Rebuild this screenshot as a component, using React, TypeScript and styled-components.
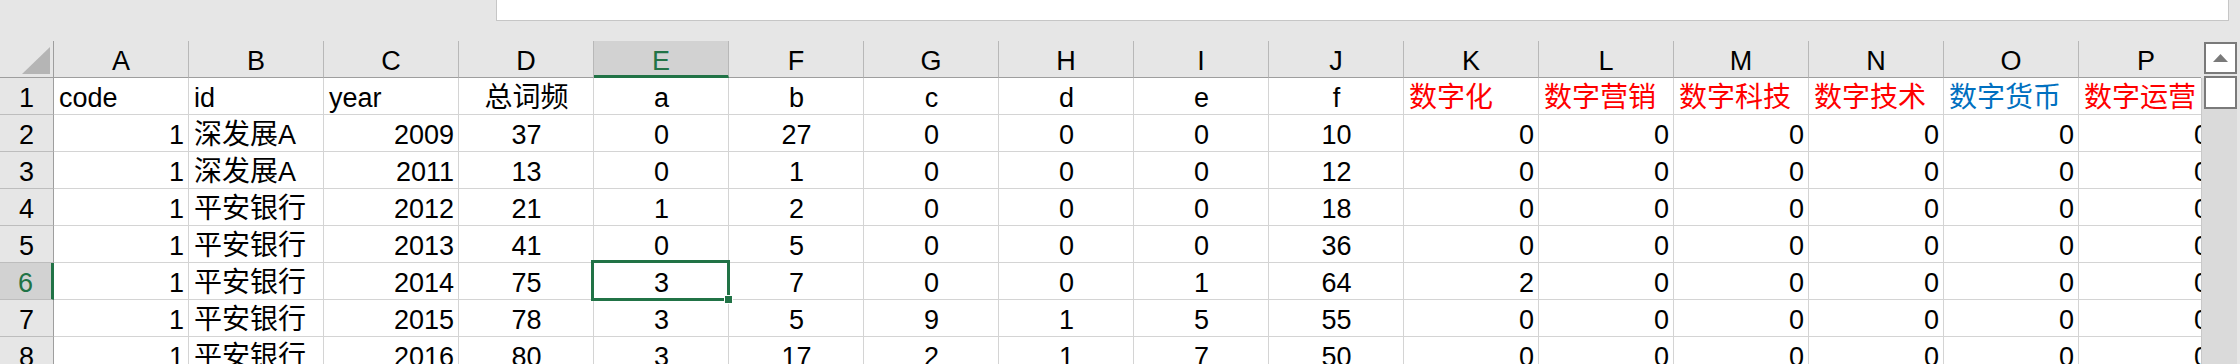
import styled, { createGlobalStyle, css } from 'styled-components'

const GREEN = '#217346'

const GlobalStyle = createGlobalStyle`
  html,
  body {
    margin: 0;
    padding: 0;
    background: #e6e6e6;
    overflow: hidden;
  }
`

const Window = styled.div`
  width: 2240px;
  height: 364px;
  display: flex;
  flex-direction: column;
  background: #e6e6e6;
  font-family: 'Liberation Sans', 'Noto Sans CJK SC', sans-serif;
  font-size: 27px;
  color: #000;
  overflow: hidden;
`

const FormulaRow = styled.div`
  height: 41px;
  flex-shrink: 0;
  display: flex;
  padding: 0 11px 0 496px;
  box-sizing: border-box;
`

const FormulaBox = styled.div`
  flex: 1;
  height: 21px;
  box-sizing: border-box;
  background: #fff;
  border: 1px solid #c6c6c6;
  border-top: none;
`

const Body = styled.div`
  flex: 1;
  display: flex;
  min-height: 0;
`

const Sheet = styled.div`
  flex: 1;
  overflow: hidden;
  display: grid;
  grid-template-columns: 54px repeat(16, 135px);
  grid-auto-rows: 37px;
  align-content: start;
`

const Corner = styled.div`
  box-sizing: border-box;
  background: #e6e6e6;
  border-right: 1px solid #9e9e9e;
  border-bottom: 1px solid #9e9e9e;
  display: flex;
  align-items: flex-end;
  justify-content: flex-end;
  padding: 0 3px 3px 0;
`

const ColHead = styled.div<{ $active?: boolean }>`
  box-sizing: border-box;
  display: flex;
  align-items: flex-end;
  justify-content: center;
  line-height: 27px;
  background: ${(p) => (p.$active ? '#d2d2d2' : '#e6e6e6')};
  color: ${(p) => (p.$active ? GREEN : '#000')};
  border-right: 1px solid #b8b8b8;
  border-bottom: ${(p) => (p.$active ? `3px solid ${GREEN}` : '1px solid #9e9e9e')};
  padding-bottom: ${(p) => (p.$active ? '0' : '2px')};
`

const RowHead = styled.div<{ $active?: boolean }>`
  box-sizing: border-box;
  display: flex;
  align-items: flex-end;
  justify-content: center;
  line-height: 27px;
  padding-bottom: 2px;
  background: ${(p) => (p.$active ? '#d2d2d2' : '#e6e6e6')};
  color: ${(p) => (p.$active ? GREEN : '#000')};
  border-bottom: 1px solid #bdbdbd;
  border-right: ${(p) => (p.$active ? `3px solid ${GREEN}` : '1px solid #9e9e9e')};
`

type Align = 'left' | 'right' | 'center'

const justify: Record<Align, string> = {
  left: 'flex-start',
  right: 'flex-end',
  center: 'center',
}

const Cell = styled.div<{ $align: Align; $color?: string; $selected?: boolean }>`
  position: relative;
  box-sizing: border-box;
  background: #fff;
  border-right: 1px solid #d4d4d4;
  border-bottom: 1px solid #d4d4d4;
  display: flex;
  align-items: flex-end;
  justify-content: ${(p) => justify[p.$align]};
  padding: 0 4px 2px 5px;
  line-height: 27px;
  white-space: nowrap;
  color: ${(p) => p.$color || '#000'};

  ${(p) =>
    p.$selected &&
    css`
      z-index: 2;

      &::after {
        content: '';
        position: absolute;
        top: -3px;
        left: -3px;
        right: -2px;
        bottom: -2px;
        border: 3px solid ${GREEN};
      }

      &::before {
        content: '';
        position: absolute;
        right: -5px;
        bottom: -5px;
        width: 7px;
        height: 7px;
        background: ${GREEN};
        border: 1px solid #fff;
        z-index: 1;
      }
    `}
`

// Chinese glyphs sit a touch wider than the latin ones in the sheet font
const Han = styled.span`
  font-size: 28px;
  line-height: 27px;
`

const ScrollBar = styled.div`
  width: 39px;
  flex-shrink: 0;
  display: flex;
  flex-direction: column;
  padding-right: 3px;
  box-sizing: border-box;
`

const ButtonZone = styled.div`
  height: 37px;
  flex-shrink: 0;
  padding: 1px 0 0 3px;
  box-sizing: border-box;
`

const ScrollButton = styled.div`
  width: 33px;
  height: 32px;
  box-sizing: border-box;
  border: 2px solid #7a7a7a;
  background: #fff;
  display: flex;
  align-items: center;
  justify-content: center;
`

const Track = styled.div`
  flex: 1;
  background: #dadada;
  border-left: 1px solid #c8c8c8;
  padding-left: 2px;
  position: relative;
  z-index: 1;
`

const Thumb = styled(ScrollButton)`
  height: 33px;
  margin-top: -2px;
`

const letters = 'ABCDEFGHIJKLMNOP'.split('')

const RED = '#ff0000'
const BLUE = '#0070c0'

const headers = [
  'code', 'id', 'year', '总词频', 'a', 'b', 'c', 'd', 'e', 'f',
  '数字化', '数字营销', '数字科技', '数字技术', '数字货币', '数字运营',
]

const headerColors: (string | undefined)[] = [
  undefined, undefined, undefined, undefined, undefined, undefined, undefined, undefined, undefined, undefined,
  RED, RED, RED, RED, BLUE, RED,
]

const rows: (string | number)[][] = [
  [1, '深发展A', 2009, 37, 0, 27, 0, 0, 0, 10, 0, 0, 0, 0, 0, 0],
  [1, '深发展A', 2011, 13, 0, 1, 0, 0, 0, 12, 0, 0, 0, 0, 0, 0],
  [1, '平安银行', 2012, 21, 1, 2, 0, 0, 0, 18, 0, 0, 0, 0, 0, 0],
  [1, '平安银行', 2013, 41, 0, 5, 0, 0, 0, 36, 0, 0, 0, 0, 0, 0],
  [1, '平安银行', 2014, 75, 3, 7, 0, 0, 1, 64, 2, 0, 0, 0, 0, 0],
  [1, '平安银行', 2015, 78, 3, 5, 9, 1, 5, 55, 0, 0, 0, 0, 0, 0],
  [1, '平安银行', 2016, 80, 3, 17, 2, 1, 7, 50, 0, 0, 0, 0, 0, 0],
]

// columns D..J are centred, the rest use Excel's general alignment
const alignFor = (col: number, value: string | number): Align => {
  if (col >= 3 && col <= 9) return 'center'
  return typeof value === 'number' ? 'right' : 'left'
}

// split a value into runs so the Chinese part gets its own span
const renderText = (value: string | number) => {
  if (typeof value === 'number') return value
  const parts = value.match(/[\u4e00-\u9fff]+|[^\u4e00-\u9fff]+/g) || []
  return parts.map((part, i) =>
    /[\u4e00-\u9fff]/.test(part) ? <Han key={i}>{part}</Han> : <span key={i}>{part}</span>
  )
}

const SEL_ROW = 6
const SEL_COL = 4

function CornerMark() {
  return (
    <svg width="28" height="27" viewBox="0 0 28 27">
      <polygon points="0,27 28,27 28,0" fill="#b5b5b5" />
    </svg>
  )
}

function UpArrow() {
  return (
    <svg width="15" height="8" viewBox="0 0 15 8">
      <polygon points="0,8 15,8 7.5,0" fill="#7a7a7a" />
    </svg>
  )
}

export default function App() {
  return (
    <Window>
      <GlobalStyle />
      <FormulaRow>
        <FormulaBox />
      </FormulaRow>
      <Body>
        <Sheet>
          <Corner>
            <CornerMark />
          </Corner>
          {letters.map((l, i) => (
            <ColHead key={l} $active={i === SEL_COL}>
              {l}
            </ColHead>
          ))}

          <RowHead>1</RowHead>
          {headers.map((h, i) => (
            <Cell key={h} $align={alignFor(i, h)} $color={headerColors[i]}>
              <span>{renderText(h)}</span>
            </Cell>
          ))}

          {rows.map((row, r) => {
            const rowNo = r + 2
            return [
              <RowHead key={`h${rowNo}`} $active={rowNo === SEL_ROW}>
                {rowNo}
              </RowHead>,
              ...row.map((v, c) => (
                <Cell
                  key={`${rowNo}-${c}`}
                  $align={alignFor(c, v)}
                  $selected={rowNo === SEL_ROW && c === SEL_COL}
                >
                  <span>{renderText(v)}</span>
                </Cell>
              )),
            ]
          })}
        </Sheet>
        <ScrollBar>
          <ButtonZone>
            <ScrollButton>
              <UpArrow />
            </ScrollButton>
          </ButtonZone>
          <Track>
            <Thumb />
          </Track>
        </ScrollBar>
      </Body>
    </Window>
  )
}
